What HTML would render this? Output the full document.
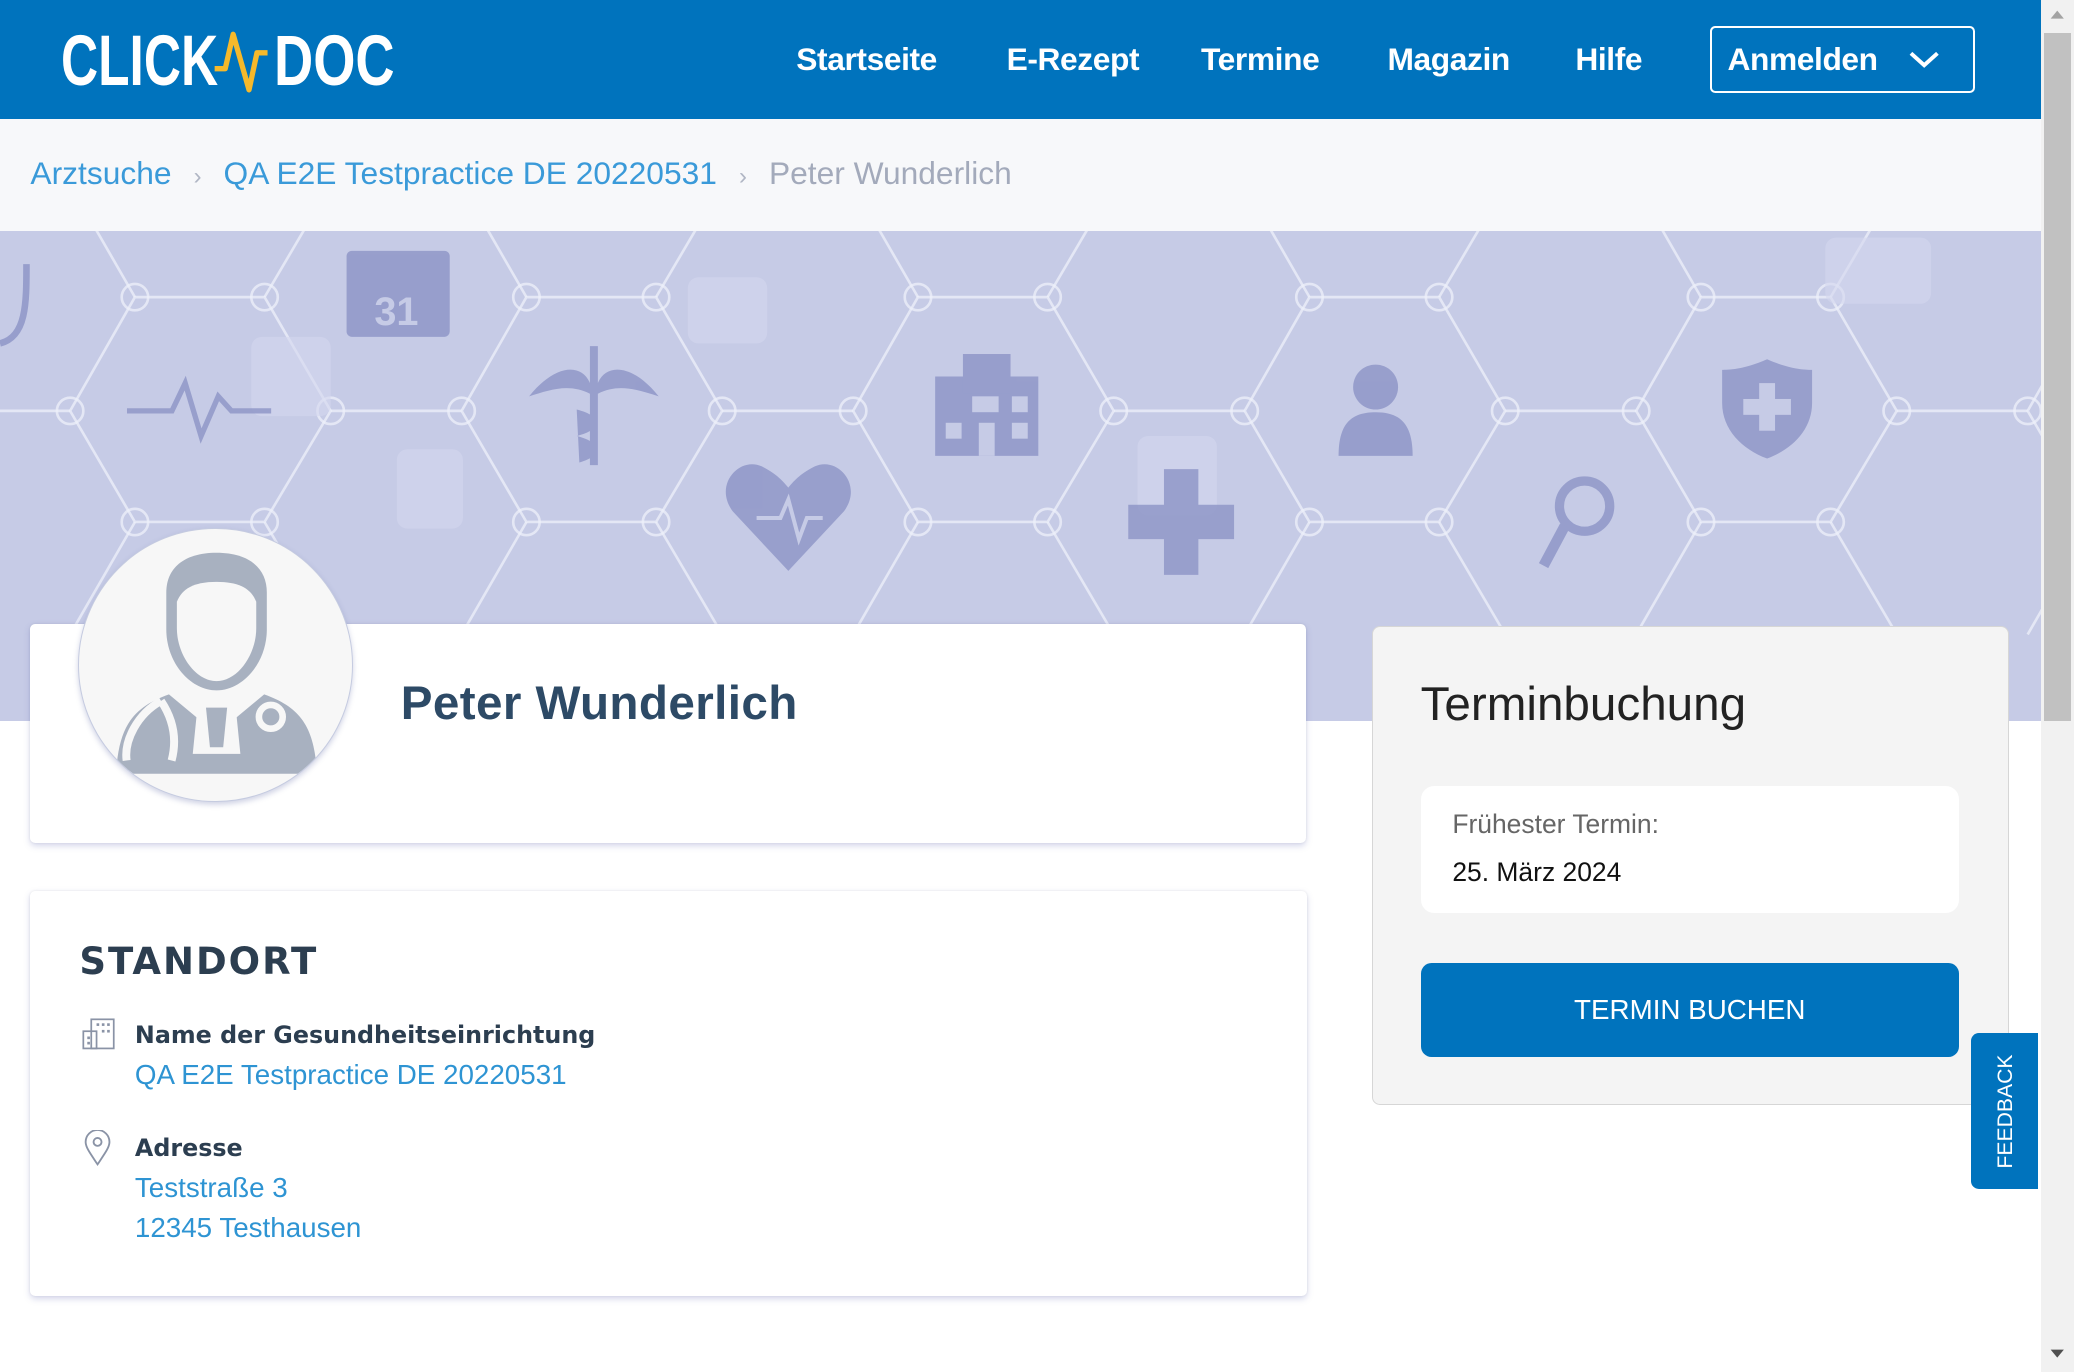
<!DOCTYPE html>
<html><head><meta charset="utf-8">
<style>
html,body{margin:0;padding:0;width:2074px;height:1372px;overflow:hidden;background:#fff}
#w{zoom:1.32270;width:1568px;height:1037px;position:relative;font-family:"Liberation Sans",Arial,sans-serif;overflow:hidden}
.abs{position:absolute}
.hdr{left:0;top:0;width:1543px;height:90px;background:#0073bd}
.nav{color:#fff;font-weight:bold;font-size:24px;top:31px;letter-spacing:-0.3px}
.bc{left:0;top:90px;width:1543px;height:85px;background:#f7f8fa}
.hero{left:0;top:175px;width:1543px;height:370px;background:#c6cbe6}
.card{background:#fff;border-radius:4px;box-shadow:0 2px 5px rgba(90,100,180,.25),0 0 2px rgba(0,0,0,.08)}
.lbl{font-weight:bold;color:#2c3e50;font-size:19px}
.lnk{color:#2e94d3;font-size:21px}
.logo{font-weight:bold;font-size:54px;color:#fff;line-height:56px;top:18px;transform-origin:0 0;white-space:nowrap}
</style></head><body><div id="w">
<div class="abs hdr"></div>
<div class="abs logo" style="left:46px;transform:scaleX(0.72)">CLICK</div>
<div class="abs logo" style="left:207px;transform:scaleX(0.76)">DOC</div>
<svg class="abs" style="left:160px;top:22px" width="48" height="50"><polyline points="2,30 10,30 16,4 28,46 34,18 42,18" fill="none" stroke="#f6b92b" stroke-width="4" stroke-linejoin="round"/></svg>
<div class="abs nav" style="left:602px">Startseite</div>
<div class="abs nav" style="left:761px">E-Rezept</div>
<div class="abs nav" style="left:908px">Termine</div>
<div class="abs nav" style="left:1049px">Magazin</div>
<div class="abs nav" style="left:1191px">Hilfe</div>
<div class="abs" style="left:1293px;top:20px;width:197px;height:47px;border:2px solid #fff;border-radius:4px"></div>
<div class="abs nav" style="left:1306px">Anmelden</div>
<svg class="abs" style="left:1442px;top:36px" width="26" height="18"><polyline points="3,4 13,13 23,4" fill="none" stroke="#fff" stroke-width="3"/></svg>

<div class="abs bc"></div>
<div class="abs" style="left:23px;top:117px;font-size:24px;color:#3a9ad9;white-space:nowrap">Arztsuche <span style="color:#b0b6c4;font-size:18px;margin:0 10px">&#x203A;</span> QA E2E Testpractice DE 20220531 <span style="color:#b0b6c4;font-size:18px;margin:0 10px">&#x203A;</span> <span style="color:#a3aabb">Peter Wunderlich</span></div>

<div class="abs hero"></div>
<svg class="abs" style="left:0;top:175px" width="1543" height="370" viewBox="0 175 1543 370">
<defs><g id="hx" fill="none" stroke="#eef0fa" stroke-opacity=".75" stroke-width="2">
<polygon points="102,225 200,225 250,311 200,395 102,395 53,311"/>
<line x1="250" y1="311" x2="349" y2="311"/>
<line x1="200" y1="225" x2="250" y2="140"/><line x1="102" y1="225" x2="53" y2="140"/>
<line x1="200" y1="395" x2="250" y2="480"/><line x1="102" y1="395" x2="53" y2="480"/>
<circle cx="102" cy="225" r="10"/><circle cx="200" cy="225" r="10"/><circle cx="250" cy="311" r="10"/><circle cx="200" cy="395" r="10"/><circle cx="102" cy="395" r="10"/><circle cx="53" cy="311" r="10"/>
</g></defs>
<use href="#hx" x="-296"/><use href="#hx"/><use href="#hx" x="296"/><use href="#hx" x="592"/><use href="#hx" x="888"/><use href="#hx" x="1184"/><use href="#hx" x="1480"/>
<g fill="#d3d7ee" opacity=".6"><rect x="190" y="255" width="60" height="60" rx="8"/><rect x="520" y="210" width="60" height="50" rx="8"/><rect x="860" y="330" width="60" height="60" rx="8"/><rect x="1380" y="180" width="80" height="50" rx="8"/><rect x="300" y="340" width="50" height="60" rx="8"/></g>
<g fill="#8c94c6" opacity=".8">
<rect x="262" y="190" width="78" height="65" rx="4"/>
<text x="283" y="246" font-size="30" font-weight="bold" fill="#c6cbe6" font-family="Liberation Sans">31</text>
<path d="M446 262h6v90h-6z M400 300c20-25 40-25 46-10v8c-16-8-30-3-46 2z M498 300c-20-25-40-25-46-10v8c16-8 30-3 46 2z M436 310c20 5 20 15 0 20c20 5 20 15 2 20" />
<rect x="707" y="285" width="78" height="60"/><rect x="728" y="268" width="36" height="30"/>
<path d="M596 432l-42-45c-15-20 5-42 22-34 10 5 15 10 20 16 5-6 10-11 20-16 17-8 37 14 22 34z"/>
<path d="M880 355h26v27h27v26h-27v27h-26v-27h-27v-26h27z"/>
<circle cx="1040" cy="293" r="17"/><path d="M1012 345c0-25 10-33 28-33s28 8 28 33z"/>
<path d="M1336 272c18 8 30 8 34 8v25c0 20-15 35-34 42-19-7-34-22-34-42v-25c4 0 16 0 34-8z"/>
<circle cx="1198" cy="383" r="19" fill="none" stroke="#8c94c6" stroke-width="7"/><path d="M1183 398l-16 30" stroke="#8c94c6" stroke-width="8"/>
<polyline points="96,311 130,311 140,290 152,330 165,300 175,311 205,311" fill="none" stroke="#8c94c6" stroke-width="4"/>
<path d="M20 200c0 30 0 55 -20 60" fill="none" stroke="#8c94c6" stroke-width="5"/>
</g>
<g fill="#c6cbe6"><rect x="735" y="300" width="20" height="12"/><rect x="765" y="300" width="12" height="12"/><rect x="715" y="320" width="12" height="12"/><rect x="765" y="320" width="12" height="12"/><rect x="740" y="320" width="12" height="25"/><rect x="1330" y="290" width="12" height="36"/><rect x="1318" y="302" width="36" height="12"/></g>
<polyline points="572,392 590,392 596,378 604,408 610,392 622,392" fill="none" stroke="#c6cbe6" stroke-width="3"/>
</svg>

<div class="abs card" style="left:23px;top:472px;width:964px;height:165px"></div>
<div class="abs" style="left:59px;top:399px;width:206px;height:206px;border-radius:50%;background:#f7f7f7;border:1px solid #c5cbe0;box-shadow:0 2px 4px rgba(100,110,170,.3);overflow:hidden">
<svg width="206" height="206">
<path d="M104 18c-25 0-38 12-38 30v28c0 25 18 46 38 46s38-21 38-46V48c0-18-13-30-38-30z" fill="#a8b1c0"/>
<path d="M104 40c-17 0-26 5-30 15v20c0 20 14 40 30 40s30-20 30-40V55c-4-10-13-15-30-15z" fill="#f7f7f7"/>
<path d="M28 185c2-35 12-50 40-60l36 30 36-30c28 10 38 25 40 60z" fill="#a8b1c0"/>
<path d="M90 130l14 16 14-16 4 40h-36z" fill="#f7f7f7"/>
<path d="M96 135h16l-3 30h-10z" fill="#a8b1c0"/>
<path d="M62 130c-18 10-28 30-26 45 M62 130c10 15 12 30 8 45" fill="none" stroke="#f7f7f7" stroke-width="6"/>
<circle cx="145" cy="142" r="9" fill="none" stroke="#f7f7f7" stroke-width="5"/>
</svg></div>
<div class="abs" style="left:303px;top:511px;font-size:36px;color:#2d4a66;font-weight:bold;letter-spacing:0.3px">Peter Wunderlich</div>

<div class="abs card" style="left:23px;top:674px;width:965px;height:306px"></div>
<div class="abs" style="left:60px;top:711px;font-size:28px;font-weight:900;color:#2c3e50;letter-spacing:1.5px;font-family:'DejaVu Sans','Liberation Sans',sans-serif">STANDORT</div>
<svg class="abs" style="left:62px;top:770px" width="26" height="26"><rect x="7" y="1" width="17" height="22" fill="none" stroke="#8a93a6" stroke-width="1.3"/><rect x="1" y="10" width="10" height="13" fill="none" stroke="#8a93a6" stroke-width="1.3"/><g fill="#8a93a6"><rect x="11" y="4" width="2" height="2"/><rect x="15" y="4" width="2" height="2"/><rect x="19" y="4" width="2" height="2"/><rect x="15" y="9" width="2" height="2"/><rect x="19" y="9" width="2" height="2"/><rect x="4" y="14" width="2" height="2"/><rect x="4" y="18" width="2" height="2"/></g></svg>
<div class="abs lbl" style="left:102px;top:772px;font-family:'DejaVu Sans','Liberation Sans',sans-serif;font-size:18px">Name der Gesundheitseinrichtung</div>
<div class="abs lnk" style="left:102px;top:801px">QA E2E Testpractice DE 20220531</div>
<svg class="abs" style="left:63px;top:854px" width="22" height="28"><path d="M11 26C5 17 2 13 2 9a9 9 0 0118 0c0 4-3 8-9 17z" fill="none" stroke="#8a93a6" stroke-width="1.4"/><circle cx="11" cy="9" r="3" fill="none" stroke="#8a93a6" stroke-width="1.4"/></svg>
<div class="abs lbl" style="left:102px;top:857px;font-family:'DejaVu Sans','Liberation Sans',sans-serif;font-size:18px">Adresse</div>
<div class="abs lnk" style="left:102px;top:886px">Teststraße 3</div>
<div class="abs lnk" style="left:102px;top:916px">12345 Testhausen</div>

<div class="abs" style="left:1037px;top:473px;width:480px;height:361px;background:#f4f4f4;border:1px solid #d6d6d6;border-radius:6px"></div>
<div class="abs" style="left:1074px;top:512px;font-size:36px;color:#222">Terminbuchung</div>
<div class="abs" style="left:1074px;top:594px;width:407px;height:96px;background:#fff;border-radius:10px"></div>
<div class="abs" style="left:1098px;top:612px;font-size:20px;color:#666">Frühester Termin:</div>
<div class="abs" style="left:1098px;top:648px;font-size:20px;color:#111">25. März 2024</div>
<div class="abs" style="left:1074px;top:728px;width:407px;height:71px;background:#0073bd;border-radius:8px;color:#fff;font-size:21px;line-height:71px;text-align:center">TERMIN BUCHEN</div>

<div class="abs" style="left:1490px;top:781px;width:51px;height:118px;background:#0073bd;border-radius:6px 0 0 6px"></div>
<div class="abs" style="left:1471px;top:829px;width:90px;height:22px;transform:rotate(-90deg);color:#fff;font-size:16px;text-align:center;line-height:22px">FEEDBACK</div>

<div class="abs" style="left:1543px;top:0;width:25px;height:1037px;background:#f1f1f1"></div>
<div class="abs" style="left:1545px;top:25px;width:21px;height:520px;background:#c1c1c1"></div>
<svg class="abs" style="left:1548px;top:6px" width="14" height="10"><polygon points="7,2 12,8 2,8" fill="#a3a3a3"/></svg>
<svg class="abs" style="left:1548px;top:1018px" width="14" height="10"><polygon points="2,2 12,2 7,8" fill="#505050"/></svg>
</div></body></html>
